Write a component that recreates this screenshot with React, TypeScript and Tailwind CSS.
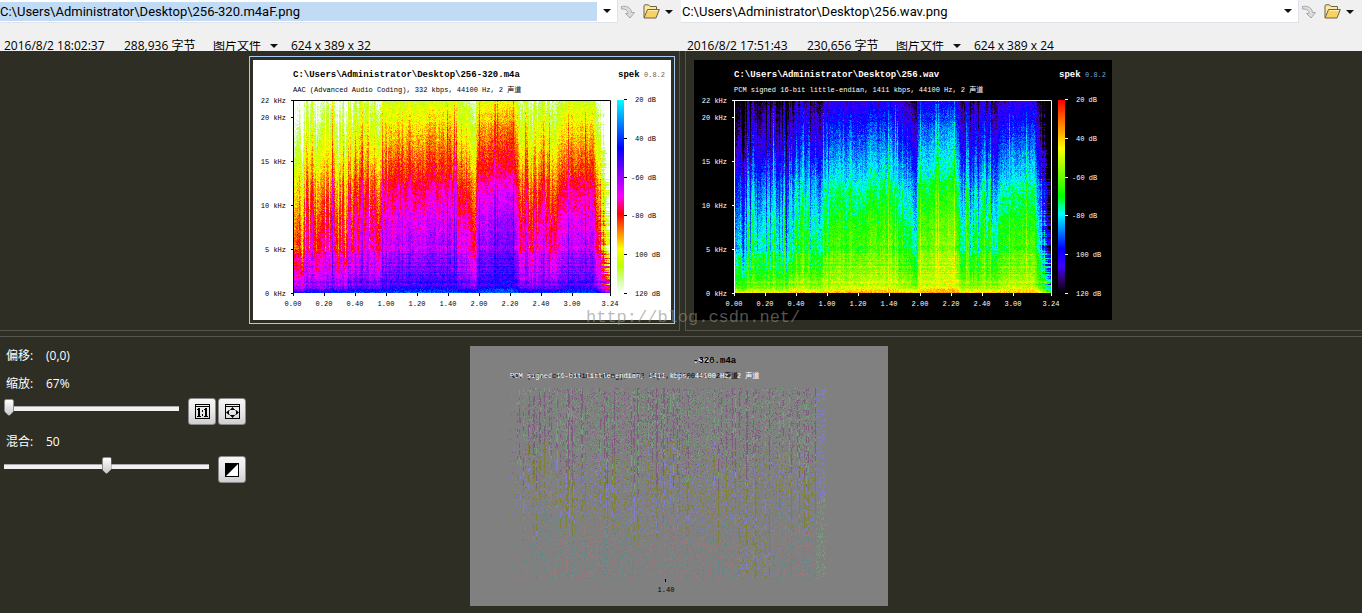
import React from "react";

const PLOT_W = 317;
const PLOT_H = 193;
const LEVELS = 56;

type Stop = [number, number];

// Small seeded generator so the plots stay identical between renders
function createRandom(seed: number) {
  let s = seed;
  return () => {
    s = (s + 0x6d2b79f5) | 0;
    let t = Math.imul(s ^ (s >>> 15), 1 | s);
    t = (t + Math.imul(t ^ (t >>> 7), 61 | t)) ^ t;
    return ((t ^ (t >>> 14)) >>> 0) / 4294967296;
  };
}

function sample(stops: Stop[], at: number) {
  if (at <= stops[0][0]) return stops[0][1];
  for (let i = 1; i < stops.length; i++) {
    const [x1, y1] = stops[i];
    const [x0, y0] = stops[i - 1];
    if (at <= x1) return y0 + ((y1 - y0) * (at - x0)) / (x1 - x0);
  }
  return stops[stops.length - 1][1];
}

// Attenuation by frequency (0 = bottom of the plot), for quiet and loud passages
const QUIET: Stop[] = [
  [0, 0.24], [0.02, 0.4], [0.1, 0.52], [0.25, 0.62], [0.4, 0.68], [0.6, 0.77], [0.72, 0.87], [0.85, 0.94], [1, 1.02],
];
const LOUD: Stop[] = [
  [0, 0.14], [0.03, 0.27], [0.1, 0.32], [0.2, 0.36], [0.35, 0.41], [0.5, 0.47], [0.6, 0.54], [0.7, 0.6], [0.85, 0.68], [1, 0.8],
];
// Loudness over time, in plot columns
const LOUDNESS: Stop[] = [
  [0, 0.1], [3, -0.1], [8, -0.2], [12, 0.1], [18, 0.1], [20, 0.25], [28, 0.05], [34, 0.2], [52, 0.1], [55, 0.5], [66, 0.6],
  [76, 0.35], [85, 0.45], [87, 0.65], [110, 0.7], [124, 0.85], [150, 0.85], [163, 0.75], [167, 0.5], [175, 0.55],
  [182, 0.2], [184, 0.85], [200, 0.95], [218, 1.1], [225, 0.7], [227, 0.3], [250, 0.3], [264, 0.35], [268, 0.65],
  [285, 0.8], [300, 0.7], [305, 0.1], [310, -0.4], [316, -1.2],
];
const STRIPES: Stop[] = [
  [0, 0.75], [52, 0.75], [54, 0.55], [86, 0.5], [90, 0.25], [165, 0.22], [182, 0.25], [185, 0.12], [224, 0.14], [227, 0.6],
  [264, 0.55], [267, 0.2], [316, 0.2],
];

function buildSpectrum() {
  const random = createRandom(256);
  const rows = Array.from({ length: PLOT_H }, () => random() - 0.5);
  const paths: string[] = Array(LEVELS).fill("");
  let drift = 0;
  for (let x = 0; x < PLOT_W; x++) {
    drift = drift * 0.55 + (random() - 0.5) * 1.1;
    let stripe = drift * sample(STRIPES, x);
    if (random() > 0.93) stripe += 0.3;
    const loudness = sample(LOUDNESS, x);
    const tilt = (random() - 0.5) * 0.12;
    let start = 0;
    let last = -1;
    for (let y = 0; y <= PLOT_H; y++) {
      let level = -2;
      if (y < PLOT_H) {
        const f = 1 - y / (PLOT_H - 1);
        const spread = Math.min(1, 0.3 + f * 4);
        const quiet = sample(QUIET, f);
        let v = quiet + (sample(LOUD, f) - quiet) * (loudness + stripe * spread * (1 + tilt));
        v += (random() + random() - 1) * 0.075;
        v += rows[y] * (f < 0.25 ? 0.07 : 0.02);
        if (x > 304) v += rows[y] * (x - 304) * 0.03;
        level = Math.max(0, Math.min(LEVELS - 1, Math.round(v * (LEVELS - 1))));
      }
      if (level !== last) {
        if (last >= 0) paths[last] += `M${x} ${start}h1v${y - start}h-1z`;
        start = y;
        last = level;
      }
    }
  }
  return paths;
}

const RED: Stop[] = [[0, 255], [0.25, 255], [0.5, 0], [0.77, 0], [0.86, 64], [0.93, 48], [1, 0]];
const GREEN: Stop[] = [[0, 0], [0.25, 255], [0.59, 255], [0.77, 0], [1, 0]];
const BLUE: Stop[] = [[0, 0], [0.5, 0], [0.59, 255], [0.86, 255], [0.93, 110], [1, 0]];

function levelColor(v: number, inverted: boolean) {
  const rgb = [RED, GREEN, BLUE].map((c) => {
    const value = Math.round(sample(c, v));
    return inverted ? 255 - value : value;
  });
  return `rgb(${rgb.join(",")})`;
}

const DIFF_COLORS = ["#70a878", "#805080", "#8080dc", "#808020", "#a07878", "#588888"];

function buildDifference() {
  const random = createRandom(320);
  const paths: string[] = Array(DIFF_COLORS.length).fill("");
  for (let x = 0; x < PLOT_W - 1; x++) {
    const edge = x > 305;
    const streak = edge ? 0 : Math.pow(random(), 3);
    const presence = x < 12 ? 0.2 : x < 52 ? 0.7 : edge ? 1.6 : 1.2;
    const favourite = random() > 0.5 ? 1 : 0;
    const zone = (random() - 0.5) * 0.3;
    const center = random();
    for (let y = 2; y < PLOT_H; y++) {
      const f = y / PLOT_H + zone;
      const near = Math.max(0, 1 - Math.abs(y / PLOT_H - center) * 1.4);
      const density = (0.12 + streak * near * 0.7) * presence;
      if (random() > density) continue;
      const pair = edge ? (y > 110 ? 0 : 2) : f < 0.4 ? 0 : f < 0.68 || (x > 226 && x < 264) ? 2 : 4;
      const color = edge ? pair : pair + (random() > 0.35 ? favourite : 1 - favourite);
      const len = streak > 0.4 && pair < 4 ? 1 + Math.floor(random() * 5) : 1;
      paths[color] += `M${x} ${y}h1v${Math.min(len, PLOT_H - y)}h-1z`;
    }
  }
  return paths;
}

const SPECTRUM = buildSpectrum();
const DIFFERENCE = buildDifference();

const TIMES: [number, string][] = [
  [0, "0.00"], [31, "0.20"], [62, "0.40"], [93, "1.00"], [124, "1.20"], [155, "1.40"],
  [186, "2.00"], [217, "2.20"], [248, "2.40"], [279, "3.00"], [317, "3.24"],
];
const FREQUENCIES: [number, string][] = [
  [40, "22 kHz"], [57, "20 kHz"], [101, "15 kHz"], [145, "10 kHz"], [189, "5 kHz"], [233, "0 kHz"],
];
const DECIBELS: [number, number, string][] = [
  [39, 382, "20 dB"], [78, 382, "40 dB"], [117, 378, "-60 dB"],
  [155, 378, "-80 dB"], [194, 382, "100 dB"], [233, 382, "120 dB"],
];

const MONO = "font-['Liberation_Mono','Noto_Sans_CJK_SC',monospace]";

interface SpectrogramProps {
  title: string;
  codec: string;
  inverted?: boolean;
}

function Spectrogram({ title, codec, inverted = false }: SpectrogramProps) {
  const ink = inverted ? "#000" : "#fff";
  const id = inverted ? "scale-light" : "scale-dark";
  return (
    <svg width="418" height="260" viewBox="0 0 418 260" fill={ink} className={`block ${MONO}`} role="img" aria-label={title}>
      <defs>
        <linearGradient id={id} x1="0" y1="0" x2="0" y2="1">
          {[0, 0.25, 0.5, 0.59, 0.77, 0.86, 0.93, 1].map((v) => (
            <stop key={v} offset={v} stopColor={levelColor(v, inverted)} />
          ))}
        </linearGradient>
      </defs>
      <rect width="418" height="260" fill={inverted ? "#fff" : "#000"} />
      <text x="40" y="17" fontSize="9" fontWeight="700">{title}</text>
      <text x="40" y="32" fontSize="7">{codec}</text>
      <text x="365" y="17" fontSize="9" fontWeight="700">spek</text>
      <text x="391" y="17" fontSize="7" fill={inverted ? "#7a5a3c" : "#6fa8d8"}>0.8.2</text>

      <g transform="translate(40 40)" shapeRendering="crispEdges">
        {SPECTRUM.map((d, i) => (
          <path key={i} d={d} fill={levelColor(i / (LEVELS - 1), inverted)} />
        ))}
      </g>
      <path d="M40.5 236V40.5H357.5V236" fill="none" stroke={ink} />

      {FREQUENCIES.map(([y, label]) => (
        <g key={label}>
          <rect x="38" y={y} width="3" height="1" />
          <text x="33" y={y + 3} fontSize="7" textAnchor="end">{label}</text>
        </g>
      ))}
      {TIMES.map(([x, label]) => (
        <g key={label}>
          <rect x={x + 40} y="233" width="1" height="3" />
          <text x={x + 40} y="246" fontSize="7" textAnchor="middle">{label}</text>
        </g>
      ))}
      <rect x="364" y="40" width="7" height="193" fill={`url(#${id})`} />
      {DECIBELS.map(([y, x, label]) => (
        <g key={label}>
          <rect x="371" y={y} width="3" height="1" />
          <text x={x} y={y + 3} fontSize="7">{label}</text>
        </g>
      ))}
    </svg>
  );
}

const AAC = "AAC (Advanced Audio Coding), 332 kbps, 44100 Hz, 2 声道";
const PCM = "PCM signed 16-bit little-endian, 1411 kbps, 44100 Hz, 2 声道";

function DifferenceImage() {
  return (
    <svg width="418" height="260" viewBox="0 0 418 260" className={`block ${MONO}`} role="img" aria-label="Difference">
      <rect width="418" height="260" fill="#808080" />
      <text x="223" y="17" fontSize="9" fontWeight="700" fill="#fff">.wav</text>
      <text x="223" y="17" fontSize="9" fontWeight="700">-320.m4a</text>
      <text x="40" y="32" fontSize="7">{AAC}</text>
      <text x="40" y="32" fontSize="7" fill="#fff">{PCM}</text>
      <g transform="translate(40 40)" shapeRendering="crispEdges">
        {DIFFERENCE.map((d, i) => (
          <path key={i} d={d} fill={DIFF_COLORS[i]} fillOpacity="0.8" />
        ))}
      </g>
      <rect x="195" y="233" width="1" height="3" />
      <text x="196" y="246" fontSize="7" textAnchor="middle">1.40</text>
    </svg>
  );
}

function Caret() {
  return (
    <svg width="8" height="4" viewBox="0 0 8 4" className="shrink-0" aria-hidden="true">
      <path d="M0 0h8L4 4z" fill="#111" />
    </svg>
  );
}

function StepIcon() {
  return (
    <svg width="14" height="14" viewBox="0 0 14 14" aria-hidden="true">
      <path
        d="M.5 1.5C5.5.5 10 2.5 10.5 7.5H13.5L9 13 4.500 8.500H7C7 5.500 4.500 3.800.5 4z"
        fill="#dcdcdc"
        stroke="#a8a8a8"
      />
    </svg>
  );
}

function FolderIcon() {
  return (
    <svg width="17" height="15" viewBox="0 0 17 15" aria-hidden="true">
      <path d="M1 13.500V1.500L2 .8H5.500L7 2.500H13.500V5" fill="#ffe9a0" stroke="#6b6348" />
      <path d="M1 14L4.500 5.500H16.300L13 14z" fill="#f9d262" stroke="#6b6348" strokeLinejoin="round" />
      <path d="M5.300 6.500H14.800" stroke="#fff0b8" />
    </svg>
  );
}

interface FileHeaderProps {
  path: string;
  selected?: boolean;
  date: string;
  size: string;
  dimensions: string;
}

function FileHeader({ path, selected, date, size, dimensions }: FileHeaderProps) {
  return (
    <div className="min-w-0 flex-1">
      {/* Path row */}
      <div className="flex h-6 items-start">
        <div className="flex h-[23px] min-w-0 flex-1 items-center border-r border-b border-[#dfe2e8] bg-white">
          <input
            type="text"
            aria-label="文件路径"
            defaultValue={path}
            className={`h-[19px] min-w-0 flex-1 font-[Roboto,sans-serif] text-[13px] leading-4 outline-none ${selected ? "bg-[#c2dbf5]" : "bg-white pl-px"}`}
          />
          <button type="button" aria-label="历史路径" className="flex h-5 w-5 items-center justify-center">
            <Caret />
          </button>
        </div>
        <div className="flex h-[23px] w-[63px] items-center pl-[3px]">
          <button type="button" aria-label="下一个" className="w-[22px]">
            <StepIcon />
          </button>
          <button type="button" aria-label="打开" className="w-[22px]">
            <FolderIcon />
          </button>
          <button type="button" aria-label="打开选项" className="flex h-4 items-center">
            <Caret />
          </button>
        </div>
      </div>
      {/* File details */}
      <div className={`flex h-[27px] items-end text-[12px] leading-[10px] whitespace-nowrap ${selected ? "pl-1" : "pl-1.5"}`}>
        <span className="w-[120px]">{date}</span>
        <span className="w-[89px]">{size}</span>
        <div className="flex w-[78px] items-center">
          <select aria-label="文件类型" className="w-[57px] appearance-none bg-transparent outline-none">
            <option>图片文件</option>
          </select>
          <Caret />
        </div>
        <span>{dimensions}</span>
      </div>
    </div>
  );
}

const sliderClass =
  "block h-[21px] appearance-none bg-transparent outline-none [&::-webkit-slider-runnable-track]:h-[5px] [&::-webkit-slider-runnable-track]:border-t [&::-webkit-slider-runnable-track]:border-[#a9a9a9] [&::-webkit-slider-runnable-track]:bg-[#f1f1f1] [&::-webkit-slider-thumb]:-mt-2 [&::-webkit-slider-thumb]:h-[17px] [&::-webkit-slider-thumb]:w-2.5 [&::-webkit-slider-thumb]:appearance-none [&::-webkit-slider-thumb]:rounded-t-xs [&::-webkit-slider-thumb]:border [&::-webkit-slider-thumb]:border-[#8a8a8a] [&::-webkit-slider-thumb]:bg-linear-to-b [&::-webkit-slider-thumb]:from-white [&::-webkit-slider-thumb]:to-[#c9c9c9] [&::-webkit-slider-thumb]:[clip-path:polygon(0_0,100%_0,100%_70%,50%_100%,0_70%)]";

const toolButtonClass =
  "flex h-[27px] w-7 items-center justify-center rounded-[3px] border border-[#8a8a8a] bg-linear-to-b from-[#f6f6f6] via-[#e8e8e8] to-[#cfcfcf]";

function ControlPanel() {
  return (
    <form className="w-[250px] pt-[10px] pl-1 text-[12px] leading-[18px] text-white">
      <p className="flex pl-0.5">
        <span className="w-10">偏移:</span>
        <span>(0,0)</span>
      </p>
      <p className="mt-[10px] flex pl-0.5">
        <label htmlFor="zoom" className="w-10">缩放:</label>
        <output htmlFor="zoom">67%</output>
      </p>
      <div className="mt-[5px] flex gap-0.5">
        <input id="zoom" type="range" min="0" max="100" defaultValue="0" className={`mr-[7px] w-[175px] ${sliderClass}`} />
        <button type="button" aria-label="实际大小" className={toolButtonClass}>
          <svg width="15" height="15" viewBox="0 0 15 15" shapeRendering="crispEdges" aria-hidden="true">
            <path d="M.5.5h14v14H.5zM1 2.500h13" fill="none" stroke="#000" />
            <path d="M2 5h1V4h2v8h1v1H2v-1h1V6H2zM9 5h1V4h2v8h1v1H9v-1h1V6H9zM7 6h1v2H7zM7 10h1v2H7z" />
          </svg>
        </button>
        <button type="button" aria-label="适合窗口" className={toolButtonClass}>
          <svg width="15" height="15" viewBox="0 0 15 15" aria-hidden="true">
            <path d="M.5.5h14v14H.5zM1 2.500h13" fill="none" stroke="#000" shapeRendering="crispEdges" />
            <path d="M7.500 3L10 6H5zM7.500 14L10 11H5zM1 8.500L4 6v5zM14 8.500L11 6v5z" />
            <path d="M4.500 6.500l1-1M10.500 6.500l-1-1M4.500 10.500l1 1M10.500 10.500l-1 1" stroke="#000" />
          </svg>
        </button>
      </div>
      <p className="mt-2 flex pl-0.5">
        <label htmlFor="blend" className="w-10">混合:</label>
        <output htmlFor="blend">50</output>
      </p>
      <div className="mt-[5px] flex gap-0.5">
        <input id="blend" type="range" min="0" max="100" defaultValue="50" className={`mr-[7px] w-[205px] ${sliderClass}`} />
        <button type="button" aria-label="反转" className={toolButtonClass}>
          <svg width="14" height="14" viewBox="0 0 14 14" aria-hidden="true">
            <rect x=".5" y=".5" width="13" height="13" fill="#fff" stroke="#000" />
            <path d="M0 0h14L0 14z" />
          </svg>
        </button>
      </div>
    </form>
  );
}

function App() {
  return (
    <div className="relative flex min-h-screen flex-col overflow-hidden bg-[#2f2e24] font-['Open_Sans','Noto_Sans_CJK_SC',sans-serif] text-black">
      <header className="flex bg-[#f0f0f0]">
        <FileHeader
          path="C:\Users\Administrator\Desktop\256-320.m4aF.png"
          selected
          date="2016/8/2 18:02:37"
          size="288,936 字节"
          dimensions="624 x 389 x 32"
        />
        <FileHeader
          path="C:\Users\Administrator\Desktop\256.wav.png"
          date="2016/8/2 17:51:43"
          size="230,656 字节"
          dimensions="624 x 389 x 24"
        />
      </header>

      {/* Compared images */}
      <main className="flex gap-[5px]">
        <section className="flex w-[calc(50%-1px)] justify-end border-r border-b border-[#55554f] pt-[5px] pr-1 pb-1.5">
          <div className="border border-[#a6caf0] p-[3px]">
            <Spectrogram title="C:\Users\Administrator\Desktop\256-320.m4a" codec={AAC} inverted />
          </div>
        </section>
        <section className="flex flex-1 border-b border-l border-[#55554f] pt-[5px] pb-1.5 pl-1">
          <div className="border border-transparent p-[3px]">
            <Spectrogram title="C:\Users\Administrator\Desktop\256.wav" codec={PCM} />
          </div>
        </section>
      </main>

      {/* Difference view */}
      <section className="mt-[5px] grid flex-1 grid-cols-[1fr_auto_1fr] border-t border-[#55554f] pr-1">
        <ControlPanel />
        <div className="pt-[9px] pb-[7px]">
          <DifferenceImage />
        </div>
      </section>

      <p className="pointer-events-none absolute top-[308px] left-[586px] font-['Liberation_Mono',monospace] text-[17px] leading-5 text-[#8e8e84]/60">
        http://blog.csdn.net/
      </p>
    </div>
  );
}

export default App;
